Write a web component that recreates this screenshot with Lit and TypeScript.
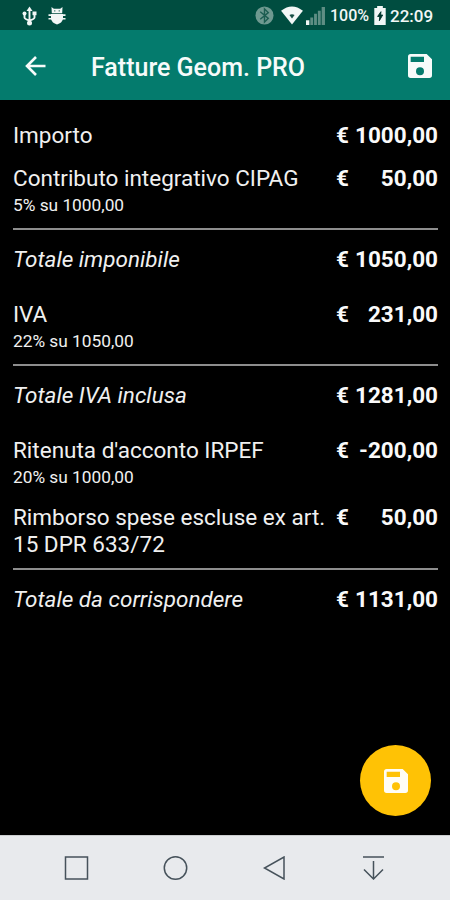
import { LitElement, html, css, nothing } from "lit";
import { customElement } from "lit/decorators.js";

interface Item {
  label: string;
  amount: string;
  note?: string;
}

interface Section {
  items: Item[];
  total: Item;
}

const SECTIONS: Section[] = [
  {
    items: [
      { label: "Importo", amount: "1000,00" },
      { label: "Contributo integrativo CIPAG", amount: "50,00", note: "5% su 1000,00" },
    ],
    total: { label: "Totale imponibile", amount: "1050,00" },
  },
  {
    items: [{ label: "IVA", amount: "231,00", note: "22% su 1050,00" }],
    total: { label: "Totale IVA inclusa", amount: "1281,00" },
  },
  {
    items: [
      { label: "Ritenuta d'acconto IRPEF", amount: "-200,00", note: "20% su 1000,00" },
      { label: "Rimborso spese escluse ex art. 15 DPR 633/72", amount: "50,00" },
    ],
    total: { label: "Totale da corrispondere", amount: "1131,00" },
  },
];

const saveIcon = html`<svg class="save" viewBox="3 3 18 18" fill="currentColor">
  <path d="M17 3H5a2 2 0 0 0-2 2v14a2 2 0 0 0 2 2h14a2 2 0 0 0 2-2V7l-4-4zm-5 16a3 3 0 1 1 0-6 3 3 0 0 1 0 6zm3-10H5V5h10v4z" />
</svg>`;

@customElement("status-bar")
export class StatusBar extends LitElement {
  static styles = css`
    :host {
      display: flex;
      align-items: center;
      height: 30px;
      box-sizing: border-box;
      padding: 1px 18px 0 22px;
      background: #004d40;
      color: #f2f7f6;
      font: 500 17px/30px Roboto, sans-serif;
    }
    svg { display: block; flex: none; }
    .usb { width: 15px; height: 20px; }
    .bug { width: 18px; height: 18px; margin-left: 11px; }
    .gap { flex: 1; }
    .bt { width: 19px; height: 19px; }
    .wifi { width: 22px; height: 19px; margin-left: 7px; }
    .signal { width: 19px; height: 18px; margin-left: 3px; }
    .percent { width: 39px; margin-left: 5px; font-size: 16px; white-space: nowrap; }
    .battery { width: 12px; height: 19px; margin-left: 5px; }
    .clock { width: 42px; margin-left: 4px; white-space: nowrap; }
  `;
  render() {
    return html`
      <svg class="usb" viewBox="0 0 15 20" fill="none" stroke="currentColor" stroke-width="1.900">
        <path d="M7.500 3v14M2.500 7v4.500q0 1.500 5 3M12.500 7v4.500q0 1.500-5 3" />
        <path d="M7.500 .5 10.500 5h-6z" fill="currentColor" stroke="none" />
        <circle cx="7.500" cy="17" r="2.500" fill="currentColor" stroke="none" />
        <circle cx="2.500" cy="7.500" r="2" fill="currentColor" stroke="none" />
        <path d="M10.500 5.500h4v3.700h-4z" fill="currentColor" stroke="none" />
      </svg>
      <svg class="bug" viewBox="0 0 18 18" fill="currentColor">
        <path d="M3.500 0l2.300 1.700h6.400L14.500 0l-.3 6.200H3.800z" />
        <path d="M3 7h12v5q-1 4-6 5.500q-5-1.500-6-5.500z" />
        <path d="M.5 7.300h17v1.700H.5zM.5 11h17v1.500H.5z" />
        <path d="M6 3.200h1.400v1.200H6zM10.600 3.200H12v1.200h-1.400z" fill="#4f867b" />
      </svg>
      <span class="gap"></span>
      <svg class="bt" viewBox="0 0 20 20">
        <circle cx="10" cy="10" r="9.500" fill="#6e9990" />
        <path d="M5.500 6l8.500 7-4 4V3l4 4-8.500 7" fill="none" stroke="#1c5d51" stroke-width="1.500" />
      </svg>
      <svg class="wifi" viewBox="0 0 23 20">
        <path d="M0 5Q11.500-4 23 5L11.500 19.500z" fill="currentColor" />
        <path d="M8.800 9.500q2.700-1.500 5.400 0l-2.700 3.700z" fill="#174f45" />
      </svg>
      <svg class="signal" viewBox="0 0 20 19" fill="#5f8e84">
        <path d="M0 14h3.500v5H0z" fill="#f2f7f6" />
        <path d="M4.500 11h3v8h-3zM8.500 7h3v12h-3zM12.500 4h3v15h-3zM16.500 0H20v19h-3.500z" />
      </svg>
      <span class="percent">100%</span>
      <svg class="battery" viewBox="0 0 12 20">
        <path d="M3 0h6v2h3v18H0V2h3z" fill="currentColor" />
        <path d="M7 6 3.500 11h2.300L5.300 15.500l3.500-6H6.600z" fill="#00362c" stroke="#00362c" />
      </svg>
      <span class="clock">22:09</span>
    `;
  }
}

@customElement("cost-row")
export class CostRow extends LitElement {
  static properties = { item: { attribute: false }, total: { type: Boolean } };
  declare item: Item;
  declare total: boolean;
  static styles = css`
    :host { display: block; }
    .row { display: flex; justify-content: space-between; align-items: flex-start; }
    .label { width: 318px; }
    .italic { font-style: italic; }
    .amount {
      display: flex;
      justify-content: space-between;
      width: 102px;
      flex: none;
      font-weight: 700;
      color: #fafafa;
      white-space: nowrap;
    }
    .note { margin-top: 3px; font-size: 17.3px; line-height: 21px; }
  `;
  render() {
    return html`
      <div class="row">
        <span class="label ${this.total ? "italic" : ""}">${this.item.label}</span>
        <span class="amount"><span>€</span><span>${this.item.amount}</span></span>
      </div>
      ${this.item.note ? html`<div class="note">${this.item.note}</div>` : nothing}
    `;
  }
}

@customElement("app-root")
export class AppRoot extends LitElement {
  static styles = css`
    :host {
      display: flex;
      flex-direction: column;
      position: relative;
      height: 900px;
      background: #000;
      color: #f0f0f0;
      font: 400 22.5px/27px Roboto, sans-serif;
    }
    svg { display: block; flex: none; }
    .bar {
      display: flex;
      align-items: center;
      height: 70px;
      padding: 0 18px 0 25px;
      background: #047b6d;
      color: #f7fbfa;
    }
    .back { width: 21px; height: 20px; margin-top: 1px; }
    .title { flex: 1; margin: 4px 0 0 45px; font-size: 25px; font-weight: 500; }
    .save { width: 24px; height: 24px; }
    .bar .save { margin-top: 1px; }
    .content { flex: 1; padding: 22px 12px 0 13px; }
    .section { margin-bottom: 28px; }
    .items { display: flex; flex-direction: column; gap: 16px; }
    .rule { height: 2.5px; margin: 11.5px 0 16px; background: #8d8d8d; }
    .section:last-child .rule { margin-top: 9.5px; }
    .fab {
      position: absolute;
      right: 19px;
      bottom: 84px;
      display: flex;
      align-items: center;
      justify-content: center;
      width: 71px;
      height: 71px;
      border: 0;
      padding: 0;
      border-radius: 50%;
      background: #ffc205;
      color: #fffdf6;
    }
    .nav {
      display: flex;
      align-items: center;
      gap: 75px;
      height: 65px;
      box-sizing: border-box;
      padding: 0 0 0 64px;
      border-top: 1px solid #cbcdcf;
      background: #e8eaed;
    }
    .nav svg { width: 25px; height: 24px; margin-right: -1px; fill: none; stroke: #46525b; stroke-width: 1.5; }
  `;
  render() {
    return html`
      <status-bar></status-bar>
      <header class="bar">
        <svg class="back" viewBox="0 0 21 20" fill="none" stroke="currentColor" stroke-width="2.600">
          <path d="M20.500 10H2M11 1 2 10l9 9" />
        </svg>
        <span class="title">Fatture Geom. PRO</span>
        ${saveIcon}
      </header>
      <main class="content">
        ${SECTIONS.map(
          (s) => html`<section class="section">
            <div class="items">${s.items.map((i) => html`<cost-row .item=${i}></cost-row>`)}</div>
            <div class="rule"></div>
            <cost-row .item=${s.total} .total=${true}></cost-row>
          </section>`
        )}
      </main>
      <button class="fab" aria-label="Salva">${saveIcon}</button>
      <nav class="nav">
        <svg viewBox="0 0 25 24"><path d="M1.500 1h22v22h-22z" /></svg>
        <svg viewBox="0 0 25 24"><circle cx="12.500" cy="12" r="11.200" /></svg>
        <svg viewBox="0 0 25 24"><path d="M22 1v22L2.500 12z" /></svg>
        <svg viewBox="0 0 25 24"><path d="M2 1h21M12.500 5v18M3 13.500l9.500 9.500 9.500-9.500" /></svg>
      </nav>
    `;
  }
}
